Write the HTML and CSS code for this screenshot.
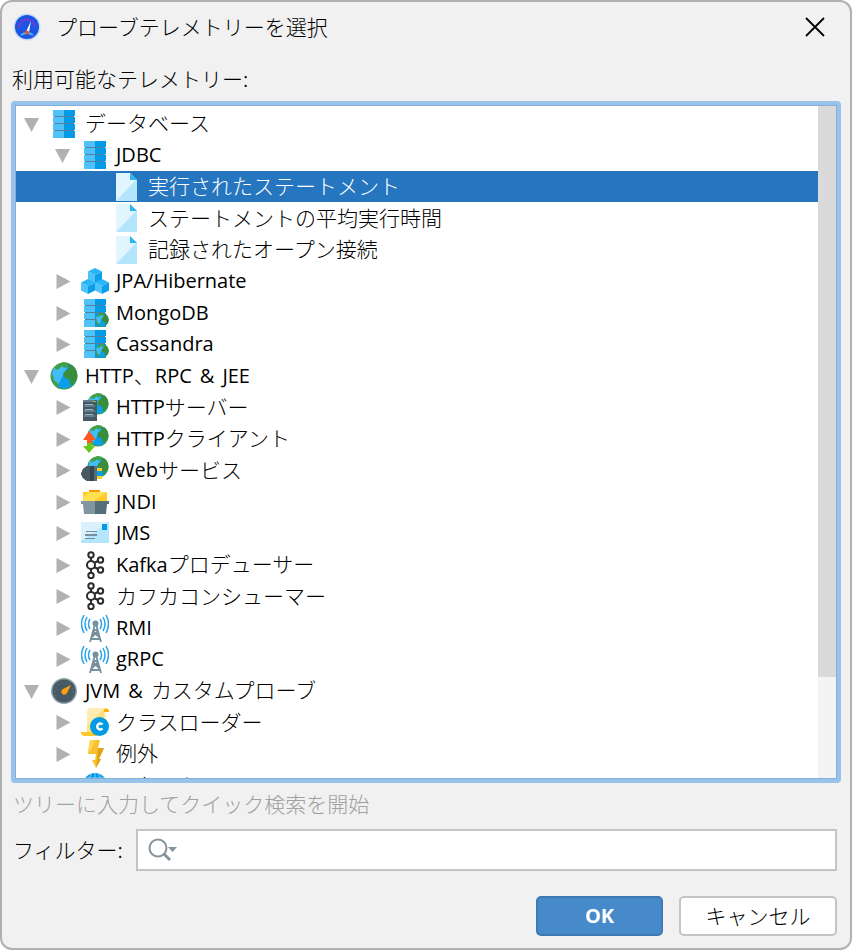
FILE: index.html
```html
<!DOCTYPE html>
<html lang="ja">
<head>
    <meta charset="UTF-8">
    <meta name="viewport" content="width=device-width, initial-scale=1.0">
    <title>プローブテレメトリーを選択</title>
    <link rel="stylesheet" href="styles.css">
</head>
<body>
    <!-- アイコン定義 -->
    <svg class="sprite" aria-hidden="true">
        <symbol id="i-open" viewBox="0 0 16 16"><path fill="#b1b1b1" d="M0 2h15L7.500 16z"/></symbol>
        <symbol id="i-closed" viewBox="0 0 16 16"><path fill="#b1b1b1" d="M1.500 1l14 7.500-14 7.500z"/></symbol>
        <symbol id="i-db" viewBox="0 0 28 28">
            <path fill="#4fc3f7" d="M3 0h11v28H3z"/>
            <path fill="#039be5" d="M14 0h11v28H14z"/>
            <path fill="#55809a" d="M4 6h20v1H4zM4 13h20v1H4zM4 20h20v1H4z"/>
            <path fill="#fff" d="M3 6h1v1H3zM24 6h1v1h-1zM3 13h1v1H3zM24 13h1v1h-1zM3 20h1v1H3zM24 20h1v1h-1z"/>
        </symbol>
        <symbol id="i-doc" viewBox="0 0 28 28">
            <path fill="#b3e5fc" d="M3 0h14l7 7v21H3z"/>
            <path fill="#e1f5fe" d="M3 0h14l6 7L3 28z"/>
            <path fill="#29b6f6" d="M17 0l7 7h-7z"/>
        </symbol>
        <symbol id="i-cube" viewBox="0 0 14 15">
            <path fill="#4fc3f7" d="M0 3.500l7 3.500v8l-7-3.500z"/>
            <path fill="#0a9fe8" d="M14 3.500L7 7v8l7-3.500z"/>
            <path fill="#29b6f6" d="M7 0l7 3.500L7 7 0 3.500z"/>
        </symbol>
        <symbol id="i-cubes" viewBox="0 0 28 28">
            <use href="#i-cube" x="7" y="1" width="14" height="15"/>
            <use href="#i-cube" x="0" y="12" width="14" height="15"/>
            <use href="#i-cube" x="14" y="12" width="14" height="15"/>
        </symbol>
        <symbol id="i-globe" viewBox="0 0 28 28">
            <circle cx="14" cy="14" r="13.500" fill="#3c9a40"/>
            <circle cx="14" cy="14" r="12.500" fill="#0a9fe8"/>
            <path fill="#42bdf8" d="M3 8C6 3 10 2 14 3l3 3-9 17C3 20 1 14 3 8z"/>
            <path fill="#43a047" d="M1 13c0 6 3 11 8 14l-1-6-4-3-1-5zM7 3l6-3 6 1-2 4-3 1-2-2-3 3-3 1-1-2z"/>
            <path fill="#388e3c" d="M14 10l5-4-1-3 4 0c4 3 6 8 5 13l-4 6-3 1-1-6-4-1-2-3z"/>
        </symbol>
        <symbol id="i-dbglobe" viewBox="0 0 28 28">
            <use href="#i-db"/>
            <use href="#i-globe" x="14" y="14" width="14" height="14"/>
        </symbol>
        <symbol id="i-server" viewBox="0 0 28 28">
            <use href="#i-globe" x="6" y="0" width="22" height="22"/>
            <path fill="#455a64" d="M2 7h14v21H2z"/>
            <path fill="#607d8b" d="M2 7h11v2H2zM3 12h11v2H3zM3 17h11v2H3zM3 22h11v2H3z"/>
            <path fill="#9bb3bf" d="M4 11h8v1H4zM4 16h8v1H4zM4 21h8v1H4z"/>
            <path fill="#8bd34a" d="M12 8h3v1h-3z"/>
        </symbol>
        <symbol id="i-client" viewBox="0 0 28 28">
            <use href="#i-globe" x="6" y="0" width="22" height="22"/>
            <path fill="#ff5722" d="M8 6l7 9h-4v3H6v-3H2z"/>
            <path fill="#64c81e" d="M6 18h5v3h3l-6 7-6-7h4z"/>
        </symbol>
        <symbol id="i-plug" viewBox="0 0 28 28">
            <use href="#i-globe" x="6" y="0" width="22" height="22"/>
            <path fill="#37474f" d="M2 13l4-3h7v15H6l-4-3-2-4z"/>
            <path fill="#455a64" d="M2 13l4-3h3v15H6l-4-3-2-4z"/>
            <path fill="#546e7a" d="M13 10h3v15h-3z"/>
            <path fill="#ffca28" d="M16 12h5v3h-5zM16 20h5v3h-5z"/>
        </symbol>
        <symbol id="i-box" viewBox="0 0 28 28">
            <path fill="#ff9800" d="M8 2h11v4H8z"/>
            <path fill="#ffc928" d="M2 4h24v10H2z"/>
            <path fill="#ffe04d" d="M8 4h18L12 14H2V9z"/>
            <path fill="#8296a0" d="M0 13h28v3H0zM2 16h12v10H3z"/>
            <path fill="#546e7a" d="M14 13h14v3h-2l-1 10H14z"/>
        </symbol>
        <symbol id="i-mail" viewBox="0 0 28 28">
            <path fill="#b3e5fc" d="M0 3h28v21H0z"/>
            <path fill="#d9f2fd" d="M0 3h28L0 22z"/>
            <path fill="#0299e8" d="M21 5h5v6h-5z"/>
            <path fill="#78909c" d="M5 12h11v1H5zM4 15h12v2H4zM4 19h10v1H4z"/>
        </symbol>
        <symbol id="i-kafka" viewBox="0 0 28 28">
            <g fill="none" stroke="#2b2b2b" stroke-width="2">
                <circle cx="10" cy="4" r="2.700"/><circle cx="10" cy="24.500" r="2.700"/>
                <circle cx="10" cy="14" r="4"/>
                <circle cx="19.500" cy="9" r="2.700"/><circle cx="19.500" cy="19" r="2.700"/>
                <path d="M10 7v3M10 18v4M13 12l4-2M13 16l4 2"/>
            </g>
        </symbol>
        <symbol id="i-tower" viewBox="0 0 28 28">
            <g fill="none" stroke="#29a4e8" stroke-width="1.500">
                <path d="M3 1q-5 9 0 18M6 3q-4 7 0 14M9 5q-3 5 0 10" />
                <path d="M25 1q5 9 0 18M22 3q4 7 0 14M19 5q3 5 0 10"/>
            </g>
            <g fill="none" stroke="#78909c" stroke-width="1.800">
                <path d="M14 10L9 28M15 10l5 18M12 16h5M11 20h7M9 25h11M12 17l7 7M17 17l-7 7"/>
            </g>
            <circle cx="14.500" cy="9.500" r="3" fill="#78909c"/>
        </symbol>
        <symbol id="i-gauge" viewBox="0 0 28 28">
            <circle cx="14" cy="14" r="13" fill="#90a4ae"/>
            <circle cx="14" cy="14" r="11.500" fill="#455a64"/>
            <path fill="none" stroke="#6f8792" stroke-dasharray="1 3" d="M6 19a9 9 0 1 1 16 0"/>
            <path fill="#ff9f0f" d="M21 8l-4 8a3 3 0 1 1-4-4z"/>
        </symbol>
        <symbol id="i-class" viewBox="0 0 28 28">
            <path fill="#ffecb3" d="M6 4q0-4 4-4h15v20l-10 4H6z"/>
            <path fill="#ffe082" d="M6 18L23 1v20l-9 5H6z"/>
            <path fill="#ffb300" d="M23 4V1q5-2 5 3z"/>
            <path fill="#ffca28" d="M0 24h16v4H4q-4 0-4-4z"/>
            <circle cx="18.500" cy="18.500" r="9.500" fill="#039be5"/>
            <path fill="none" stroke="#fff" stroke-width="2.500" d="M21.500 16.500a3 3 0 1 0 0 4"/>
        </symbol>
        <symbol id="i-bolt" viewBox="0 0 28 28">
            <path fill="#fbc02d" d="M9 0h10l-2 8h6l-5 11h2l-5 9-4-8h3l1-6H7z"/>
            <path fill="#dea514" d="M17 8h6l-5 11h2l-5 9 1-9z"/>
            <path fill="#ffd54f" d="M9 0h5l-4 11H7z"/>
        </symbol>
        <symbol id="i-net" viewBox="0 0 28 28">
            <circle cx="14" cy="14" r="12" fill="#0299e8"/>
            <path fill="none" stroke="#7fd0f8" d="M14 2v24M2 14h24M5 7h18M5 21h18M11 2q-9 12 0 24M17 2q9 12 0 24"/>
        </symbol>
    </svg>

    <main class="dialog">
        <header class="titlebar">
            <svg class="app-icon" viewBox="0 0 28 28" aria-hidden="true">
                <circle cx="14" cy="14" r="13.500" fill="#c3dcf5"/>
                <circle cx="14" cy="14" r="12" fill="#1d55e2"/>
                <path d="M6 15a8 8 0 0 1 16-1" fill="none" stroke="#8a35d0" stroke-width="1.500"/>
                <path d="M8 22q6-4 12 0" fill="none" stroke="#48b4f4" stroke-width="2"/>
                <path d="M18 8l-2 11h-3z" fill="#fff"/>
                <circle cx="14" cy="19.500" r="2" fill="#f4511e"/>
            </svg>
            <h1>プローブテレメトリーを選択</h1>
            <button class="close" type="button" aria-label="閉じる">
                <svg viewBox="0 0 20 20"><path d="M1 1l18 18M19 1L1 19" stroke="#000" stroke-width="1.800"/></svg>
            </button>
        </header>

        <h2 class="caption" id="treeLabel">利用可能なテレメトリー:</h2>
        <div class="tree-box">
            <ul class="tree" role="tree" aria-labelledby="treeLabel">
                <li role="treeitem" aria-level="1" class="row"><svg class="arrow"><use href="#i-open"/></svg><svg class="icon"><use href="#i-db"/></svg><span class="ja">データベース</span></li>
                <li role="treeitem" aria-level="2" class="row level2"><svg class="arrow"><use href="#i-open"/></svg><svg class="icon"><use href="#i-db"/></svg><span class="en">JDBC</span></li>
                <li role="treeitem" aria-level="3" class="row level3 selected" aria-selected="true"><svg class="icon"><use href="#i-doc"/></svg><span class="ja">実行されたステートメント</span></li>
                <li role="treeitem" aria-level="3" class="row level3"><svg class="icon"><use href="#i-doc"/></svg><span class="ja">ステートメントの平均実行時間</span></li>
                <li role="treeitem" aria-level="3" class="row level3"><svg class="icon"><use href="#i-doc"/></svg><span class="ja">記録されたオープン接続</span></li>
                <li role="treeitem" aria-level="2" class="row level2"><svg class="arrow"><use href="#i-closed"/></svg><svg class="icon"><use href="#i-cubes"/></svg><span class="en">JPA/Hibernate</span></li>
                <li role="treeitem" aria-level="2" class="row level2"><svg class="arrow"><use href="#i-closed"/></svg><svg class="icon"><use href="#i-dbglobe"/></svg><span class="en">MongoDB</span></li>
                <li role="treeitem" aria-level="2" class="row level2"><svg class="arrow"><use href="#i-closed"/></svg><svg class="icon"><use href="#i-dbglobe"/></svg><span class="en">Cassandra</span></li>
                <li role="treeitem" aria-level="1" class="row"><svg class="arrow"><use href="#i-open"/></svg><svg class="icon"><use href="#i-globe"/></svg><span class="en">HTTP</span><span class="ja">、</span><span class="en">RPC</span><span class="en amp">&amp;</span><span class="en">JEE</span></li>
                <li role="treeitem" aria-level="2" class="row level2"><svg class="arrow"><use href="#i-closed"/></svg><svg class="icon"><use href="#i-server"/></svg><span class="en">HTTP</span><span class="ja">サーバー</span></li>
                <li role="treeitem" aria-level="2" class="row level2"><svg class="arrow"><use href="#i-closed"/></svg><svg class="icon"><use href="#i-client"/></svg><span class="en">HTTP</span><span class="ja">クライアント</span></li>
                <li role="treeitem" aria-level="2" class="row level2"><svg class="arrow"><use href="#i-closed"/></svg><svg class="icon"><use href="#i-plug"/></svg><span class="en">Web</span><span class="ja">サービス</span></li>
                <li role="treeitem" aria-level="2" class="row level2"><svg class="arrow"><use href="#i-closed"/></svg><svg class="icon"><use href="#i-box"/></svg><span class="en">JNDI</span></li>
                <li role="treeitem" aria-level="2" class="row level2"><svg class="arrow"><use href="#i-closed"/></svg><svg class="icon"><use href="#i-mail"/></svg><span class="en">JMS</span></li>
                <li role="treeitem" aria-level="2" class="row level2"><svg class="arrow"><use href="#i-closed"/></svg><svg class="icon"><use href="#i-kafka"/></svg><span class="en">Kafka</span><span class="ja">プロデューサー</span></li>
                <li role="treeitem" aria-level="2" class="row level2"><svg class="arrow"><use href="#i-closed"/></svg><svg class="icon"><use href="#i-kafka"/></svg><span class="ja">カフカコンシューマー</span></li>
                <li role="treeitem" aria-level="2" class="row level2"><svg class="arrow"><use href="#i-closed"/></svg><svg class="icon"><use href="#i-tower"/></svg><span class="en">RMI</span></li>
                <li role="treeitem" aria-level="2" class="row level2"><svg class="arrow"><use href="#i-closed"/></svg><svg class="icon"><use href="#i-tower"/></svg><span class="en">gRPC</span></li>
                <li role="treeitem" aria-level="1" class="row"><svg class="arrow"><use href="#i-open"/></svg><svg class="icon"><use href="#i-gauge"/></svg><span class="en">JVM</span><span class="en amp">&amp;</span><span class="ja">カスタムプローブ</span></li>
                <li role="treeitem" aria-level="2" class="row level2"><svg class="arrow"><use href="#i-closed"/></svg><svg class="icon"><use href="#i-class"/></svg><span class="ja">クラスローダー</span></li>
                <li role="treeitem" aria-level="2" class="row level2"><svg class="arrow"><use href="#i-closed"/></svg><svg class="icon"><use href="#i-bolt"/></svg><span class="ja">例外</span></li>
                <li role="treeitem" aria-level="2" class="row level2"><svg class="arrow"><use href="#i-closed"/></svg><svg class="icon"><use href="#i-net"/></svg><span class="ja">ソケット</span></li>
            </ul>
            <div class="scrollbar"><div class="thumb"></div></div>
        </div>
        <p class="hint">ツリーに入力してクイック検索を開始</p>

        <div class="filter">
            <label class="ja" for="filter">フィルター:</label>
            <div class="search">
                <svg viewBox="0 0 30 24" aria-hidden="true">
                    <circle cx="10" cy="10" r="8.500" fill="none" stroke="#87939a" stroke-width="2"/>
                    <path d="M16 16l6 6" stroke="#87939a" stroke-width="3"/>
                    <path d="M20 9h9l-4.500 5z" fill="#87939a"/>
                </svg>
                <input type="text" id="filter">
            </div>
        </div>

        <footer class="buttons">
            <button class="btn primary" type="button">OK</button>
            <button class="btn" type="button"><span class="ja">キャンセル</span></button>
        </footer>
    </main>
</body>
</html>
```
FILE: styles.css
```css
* {
    margin: 0;
    padding: 0;
    box-sizing: border-box;
}

body {
    background-color: #fff;
    color: #000;
    font-family: "Noto Sans CJK JP", sans-serif;
    font-size: 21px;
    font-weight: 300;
    line-height: 30px;
}

.sprite {
    display: none;
}

.dialog {
    height: 100vh;
    min-height: 400px;
    display: flex;
    flex-direction: column;
    background-color: #f1f1f1;
    border: 2px solid #b0b0b0;
    border-radius: 12px;
    padding: 0 9px 12px;
}

.titlebar {
    display: flex;
    align-items: center;
    height: 50px;
    padding: 0 16px 0 2px;
}

.app-icon {
    width: 28px;
    height: 28px;
    margin-right: 15px;
}

h1,
h2 {
    font-size: 21px;
    font-weight: 300;
}

h1 {
    padding-bottom: 3px;
}

.close {
    display: flex;
    margin-left: auto;
    border: none;
    background: none;
}

.close svg {
    width: 20px;
    height: 20px;
}

.caption {
    height: 49px;
    padding: 11px 1px 0;
}

/* ツリー */
.tree-box {
    flex: 1;
    min-height: 0;
    display: flex;
    border: 4px solid #98c3eb;
    border-radius: 4px;
    box-shadow: inset 0 0 0 1px #86aed6;
    background-color: #fff;
    padding: 1px;
}

.tree {
    flex: 1;
    list-style: none;
    padding-top: 2px;
    overflow: hidden;
}

.row {
    display: flex;
    align-items: center;
    height: 31px;
    padding-left: 8px;
    white-space: nowrap;
}

.row:nth-child(even) {
    height: 32px;
}

.level2 {
    padding-left: 39px;
}

.level3 {
    padding-left: 97px;
}

.selected {
    background-color: #2675bf;
    color: #fff;
}

.arrow {
    width: 16px;
    height: 16px;
    margin-right: 10px;
}

.icon {
    width: 28px;
    height: 28px;
    margin-right: 7px;
}

.ja {
    padding-bottom: 3px;
}

.en {
    font-family: "Open Sans", sans-serif;
    font-size: 20px;
    font-weight: 400;
}

.amp {
    margin: 0 8px;
}

.scrollbar {
    width: 18px;
    background-color: #f4f4f4;
}

.thumb {
    height: 85%;
    background-color: #dadada;
}

.hint {
    color: #a0a0a0;
    padding: 5px 2px 11px;
}

.filter {
    display: flex;
    align-items: center;
    gap: 13px;
    padding: 0 4px 0 2px;
}

.search {
    flex: 1;
    display: flex;
    align-items: center;
    height: 42px;
    padding-left: 10px;
    border: 2px solid #c4c4c4;
    background-color: #fff;
}

.search svg {
    width: 30px;
    height: 24px;
}

.search input {
    flex: 1;
    border: none;
    outline: none;
    font: inherit;
}

.buttons {
    display: flex;
    justify-content: flex-end;
    gap: 16px;
    padding: 25px 4px 0;
}

.btn {
    display: flex;
    align-items: center;
    justify-content: center;
    width: 158px;
    height: 40px;
    border: 2px solid #c4c4c4;
    border-radius: 5px;
    background-color: #fff;
    color: #000;
    font: inherit;
}

.btn.primary {
    width: 127px;
    border-color: #3d79b3;
    background-color: #468aca;
    color: #fff;
    font-family: "Open Sans", sans-serif;
    font-size: 20px;
    font-weight: 700;
}
```
